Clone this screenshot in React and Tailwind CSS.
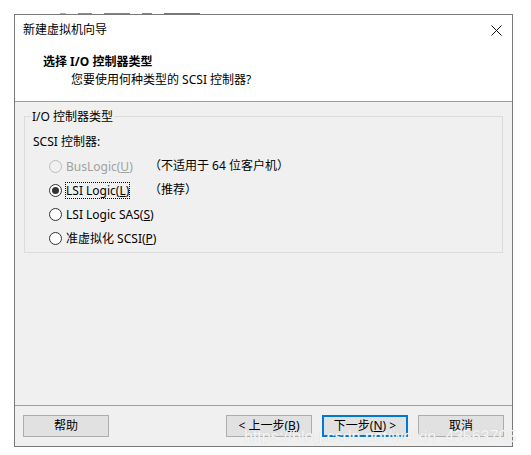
import React from "react";

const FONT = { fontFamily: '"Noto Sans", "Noto Sans CJK SC", sans-serif' };

function Radio({ checked, disabled }) {
  return (
    <span
      className={`relative inline-block w-[13px] h-[13px] rounded-full border shrink-0 ${
        disabled ? "border-[#bcbcbc] bg-[#f0f0f0]" : "border-[#333333] bg-white"
      }`}
    >
      {checked && (
        <span className="absolute left-[2px] top-[2px] w-[7px] h-[7px] rounded-full bg-[#333333]" />
      )}
    </span>
  );
}

function Option({ label, hotkey, note, checked, disabled, focused }) {
  return (
    <div className="h-[24px] flex items-center whitespace-nowrap">
      <div className="w-[100px] flex items-center gap-[4px]">
        <Radio checked={checked} disabled={disabled} />
        <span
          className={`leading-[15px] ${disabled ? "text-[#a0a0a0]" : "text-[#000]"} ${
            focused ? "outline outline-1 outline-dotted outline-[#000]" : ""
          }`}
        >
          {label}
          <span className="underline">{hotkey}</span>)
        </span>
      </div>
      {note && <span className="text-[#000]">{note}</span>}
    </div>
  );
}

function Btn({ children, primary }) {
  return (
    <button
      className={`h-[22px] w-[86px] text-[12px] text-[#000] bg-[#e1e1e1] whitespace-nowrap ${
        primary ? "border-2 border-[#0078d7]" : "border border-[#adadad]"
      }`}
    >
      {children}
    </button>
  );
}

export default function App() {
  return (
    <div className="relative w-[531px] h-[455px] bg-white text-[12px] overflow-hidden" style={FONT}>
      {/* window peeking behind */}
      <div className="absolute left-[60px] top-[13px] flex gap-[12px]">
        <span className="w-[6px] h-px bg-[#9aa8c0]" />
        <span className="w-[14px] h-px bg-[#7d92b8]" />
        <span className="w-[26px] h-px bg-[#6a84b4]" />
        <span className="w-[10px] h-px bg-[#6a84b4]" />
        <span className="w-[36px] h-px bg-[#5d7ab0]" />
      </div>

      <div className="absolute left-[14px] top-[14px] w-[499px] h-[433px] border border-[#7a7a7a] flex flex-col">
        {/* title bar */}
        <div className="h-[30px] bg-white flex items-center justify-between pl-[8px] pr-[9px]">
          <span className="text-[#000]">新建虚拟机向导</span>
          <svg width="11" height="11" viewBox="0 0 11 11" className="mr-[1px]">
            <path d="M0.5 0.5 L10.5 10.5 M10.5 0.5 L0.5 10.5" stroke="#111" strokeWidth="1" fill="none" />
          </svg>
        </div>

        {/* header */}
        <div className="h-[57px] bg-white border-b border-[#a0a0a0] pl-[28px] pt-[8px]">
          <div className="font-bold text-[#000] leading-[18px]">选择 I/O 控制器类型</div>
          <div className="pl-[28px] text-[#000] leading-[18px]">您要使用何种类型的 SCSI 控制器?</div>
        </div>

        {/* body */}
        <div className="flex-1 bg-[#f0f0f0] px-[9px] pt-[14px]">
          <div className="relative h-[137px] border border-[#dcdcdc] pl-[24px] pt-[15px]">
            <span className="absolute -top-[9px] left-[6px] px-[1px] bg-[#f0f0f0] text-[#000]">
              I/O 控制器类型
            </span>
            <div className="-ml-[16px] text-[#000] leading-[20px]">SCSI 控制器:</div>
            <div className="mt-[2px]">
              <Option label="BusLogic(" hotkey="U" note="（不适用于 64 位客户机）" disabled />
              <Option label="LSI Logic(" hotkey="L" note="（推荐）" checked focused />
              <Option label="LSI Logic SAS(" hotkey="S" />
              <Option label="准虚拟化 SCSI(" hotkey="P" />
            </div>
          </div>
        </div>

        {/* footer */}
        <div className="h-[41px] bg-[#f0f0f0] border-t border-[#a0a0a0] flex items-start pt-[9px] pl-[8px] pr-[8px]">
          <Btn>帮助</Btn>
          <div className="flex-1" />
          <div className="flex gap-[10px]">
            <Btn>&lt; 上一步(<span className="underline">B</span>)</Btn>
            <Btn primary>下一步(<span className="underline">N</span>) &gt;</Btn>
            <Btn>取消</Btn>
          </div>
        </div>
      </div>

      {/* watermark */}
      <div
        className="absolute left-[244px] top-[425px] text-[16px] text-white/85 whitespace-nowrap"
        style={{ fontFamily: '"Liberation Sans", Arial, sans-serif', textShadow: "0 0 1px #c2c2c2" }}
      >
        https://blog.csdn.net/weixin_43563705
      </div>
    </div>
  );
}
